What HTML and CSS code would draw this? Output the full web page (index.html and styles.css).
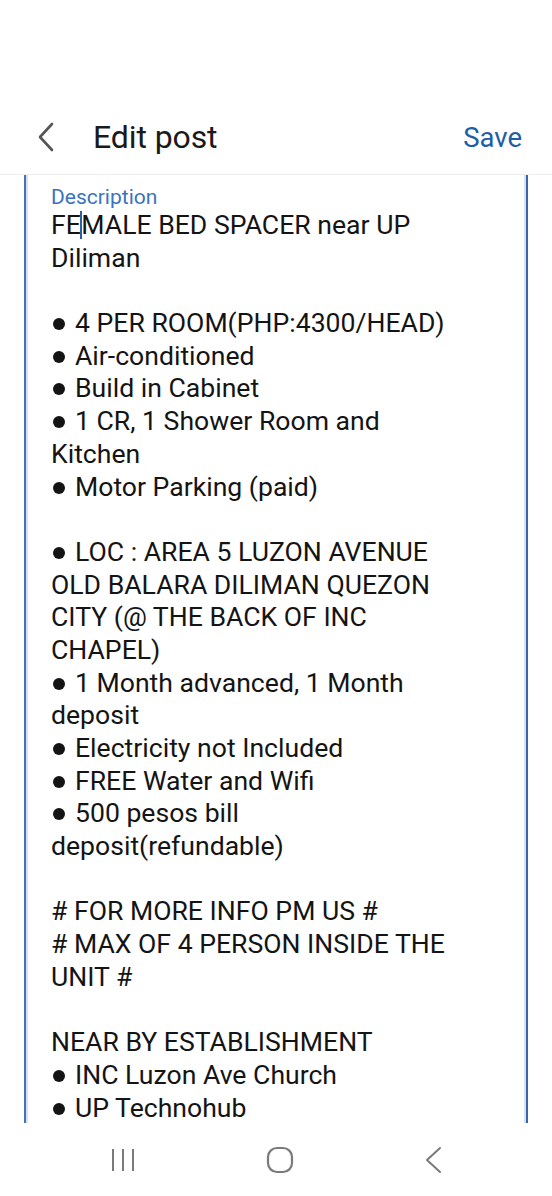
FILE: index.html
```html
<!DOCTYPE html>
<html>
<head>
<meta charset="utf-8">
<link rel="stylesheet" href="styles.css">
</head>
<body>
<div class="screen">
  <div class="status"></div>
  <header class="topbar">
    <svg class="back" width="18" height="30" viewBox="0 0 18 30"><path d="M15 2 L3 15 L15 28" fill="none" stroke="#555" stroke-width="2.6" stroke-linecap="round" stroke-linejoin="round"/></svg>
    <h1 class="title">Edit post</h1>
    <span class="save">Save</span>
  </header>
  <main class="editor">
    <div class="label">Description</div>
    <div class="body">
      <div class="line">FE<span class="caret"></span>MALE BED SPACER near UP</div>
      <div class="line">Diliman</div>
      <div class="line blank"></div>
      <div class="line"><span class="dot"></span>4 PER ROOM(PHP:4300/HEAD)</div>
      <div class="line"><span class="dot"></span>Air-conditioned</div>
      <div class="line"><span class="dot"></span>Build in Cabinet</div>
      <div class="line"><span class="dot"></span>1 CR, 1 Shower Room and</div>
      <div class="line">Kitchen</div>
      <div class="line"><span class="dot"></span>Motor Parking (paid)</div>
      <div class="line blank"></div>
      <div class="line"><span class="dot"></span>LOC : AREA 5 LUZON AVENUE</div>
      <div class="line">OLD BALARA DILIMAN QUEZON</div>
      <div class="line">CITY (@ THE BACK OF INC</div>
      <div class="line">CHAPEL)</div>
      <div class="line"><span class="dot"></span>1 Month advanced, 1 Month</div>
      <div class="line">deposit</div>
      <div class="line"><span class="dot"></span>Electricity not Included</div>
      <div class="line"><span class="dot"></span>FREE Water and Wifi</div>
      <div class="line"><span class="dot"></span>500 pesos bill</div>
      <div class="line">deposit(refundable)</div>
      <div class="line blank"></div>
      <div class="line"># FOR MORE INFO PM US #</div>
      <div class="line"># MAX OF 4 PERSON INSIDE THE</div>
      <div class="line">UNIT #</div>
      <div class="line blank"></div>
      <div class="line">NEAR BY ESTABLISHMENT</div>
      <div class="line"><span class="dot"></span>INC Luzon Ave Church</div>
      <div class="line"><span class="dot"></span>UP Technohub</div>
    </div>
  </main>
  <nav class="navbar">
    <svg width="24" height="26" viewBox="0 0 24 26"><g stroke="#7a7a7a" stroke-width="2"><line x1="2" y1="2" x2="2" y2="24"/><line x1="12" y1="2" x2="12" y2="24"/><line x1="22" y1="2" x2="22" y2="24"/></g></svg>
    <svg width="28" height="28" viewBox="0 0 28 28"><rect x="2" y="2" width="24" height="24" rx="9" fill="none" stroke="#7a7a7a" stroke-width="2.2"/></svg>
    <svg width="18" height="28" viewBox="0 0 18 28"><path d="M16 2 L3 14 L16 26" fill="none" stroke="#7a7a7a" stroke-width="2" stroke-linecap="round" stroke-linejoin="round"/></svg>
  </nav>
</div>
</body>
</html>
```
FILE: styles.css
```css
* { box-sizing: border-box; }
html, body { margin: 0; padding: 0; background: #fff; }
body { font-family: Roboto, "Noto Sans", "Liberation Sans", sans-serif; color: #111; }
.screen { width: 552px; height: 1196px; overflow: hidden; display: flex; flex-direction: column; }
.status { height: 100px; flex: none; }
.topbar {
  height: 75px; flex: none; display: flex; align-items: center;
  padding: 0 30px 0 37px; border-bottom: 1px solid #ececec;
}
.back { flex: none; margin-right: 38px; }
.title { margin: 0; font-weight: 400; font-size: 32px; color: #1a1a1a; flex: 1; letter-spacing: -0.1px; }
.save { font-size: 27.5px; color: #1d5ea5; }
.editor {
  flex: none; height: 948px; margin: 0 24px; padding: 10px 0 0 25px;
  border-left: 2px solid #4572b3; border-right: 2px solid #3a66a8;
  box-shadow: inset 2px 0 0 #d6e2f2, inset -2px 0 0 #d6e2f2;
}
.label { font-size: 21px; line-height: 24px; color: #3a73bd; }
.body { font-size: 26.6px; line-height: 32.7px; color: #141414; }
.line { white-space: nowrap; height: 32.7px; }
.line:last-child { height: 26px; }
.dot { display: inline-block; width: 12px; height: 12px; border-radius: 50%; background: #141414; margin: 0 10px 0 2px; vertical-align: 2px; }
.caret { display: inline-block; width: 2.5px; height: 28px; background: #2a5ea8; vertical-align: -5px; margin: 0 -1px 0 -1px; }
.navbar { flex: 1; display: flex; align-items: center; justify-content: space-between; padding: 0 110px 0 111px; }
```
